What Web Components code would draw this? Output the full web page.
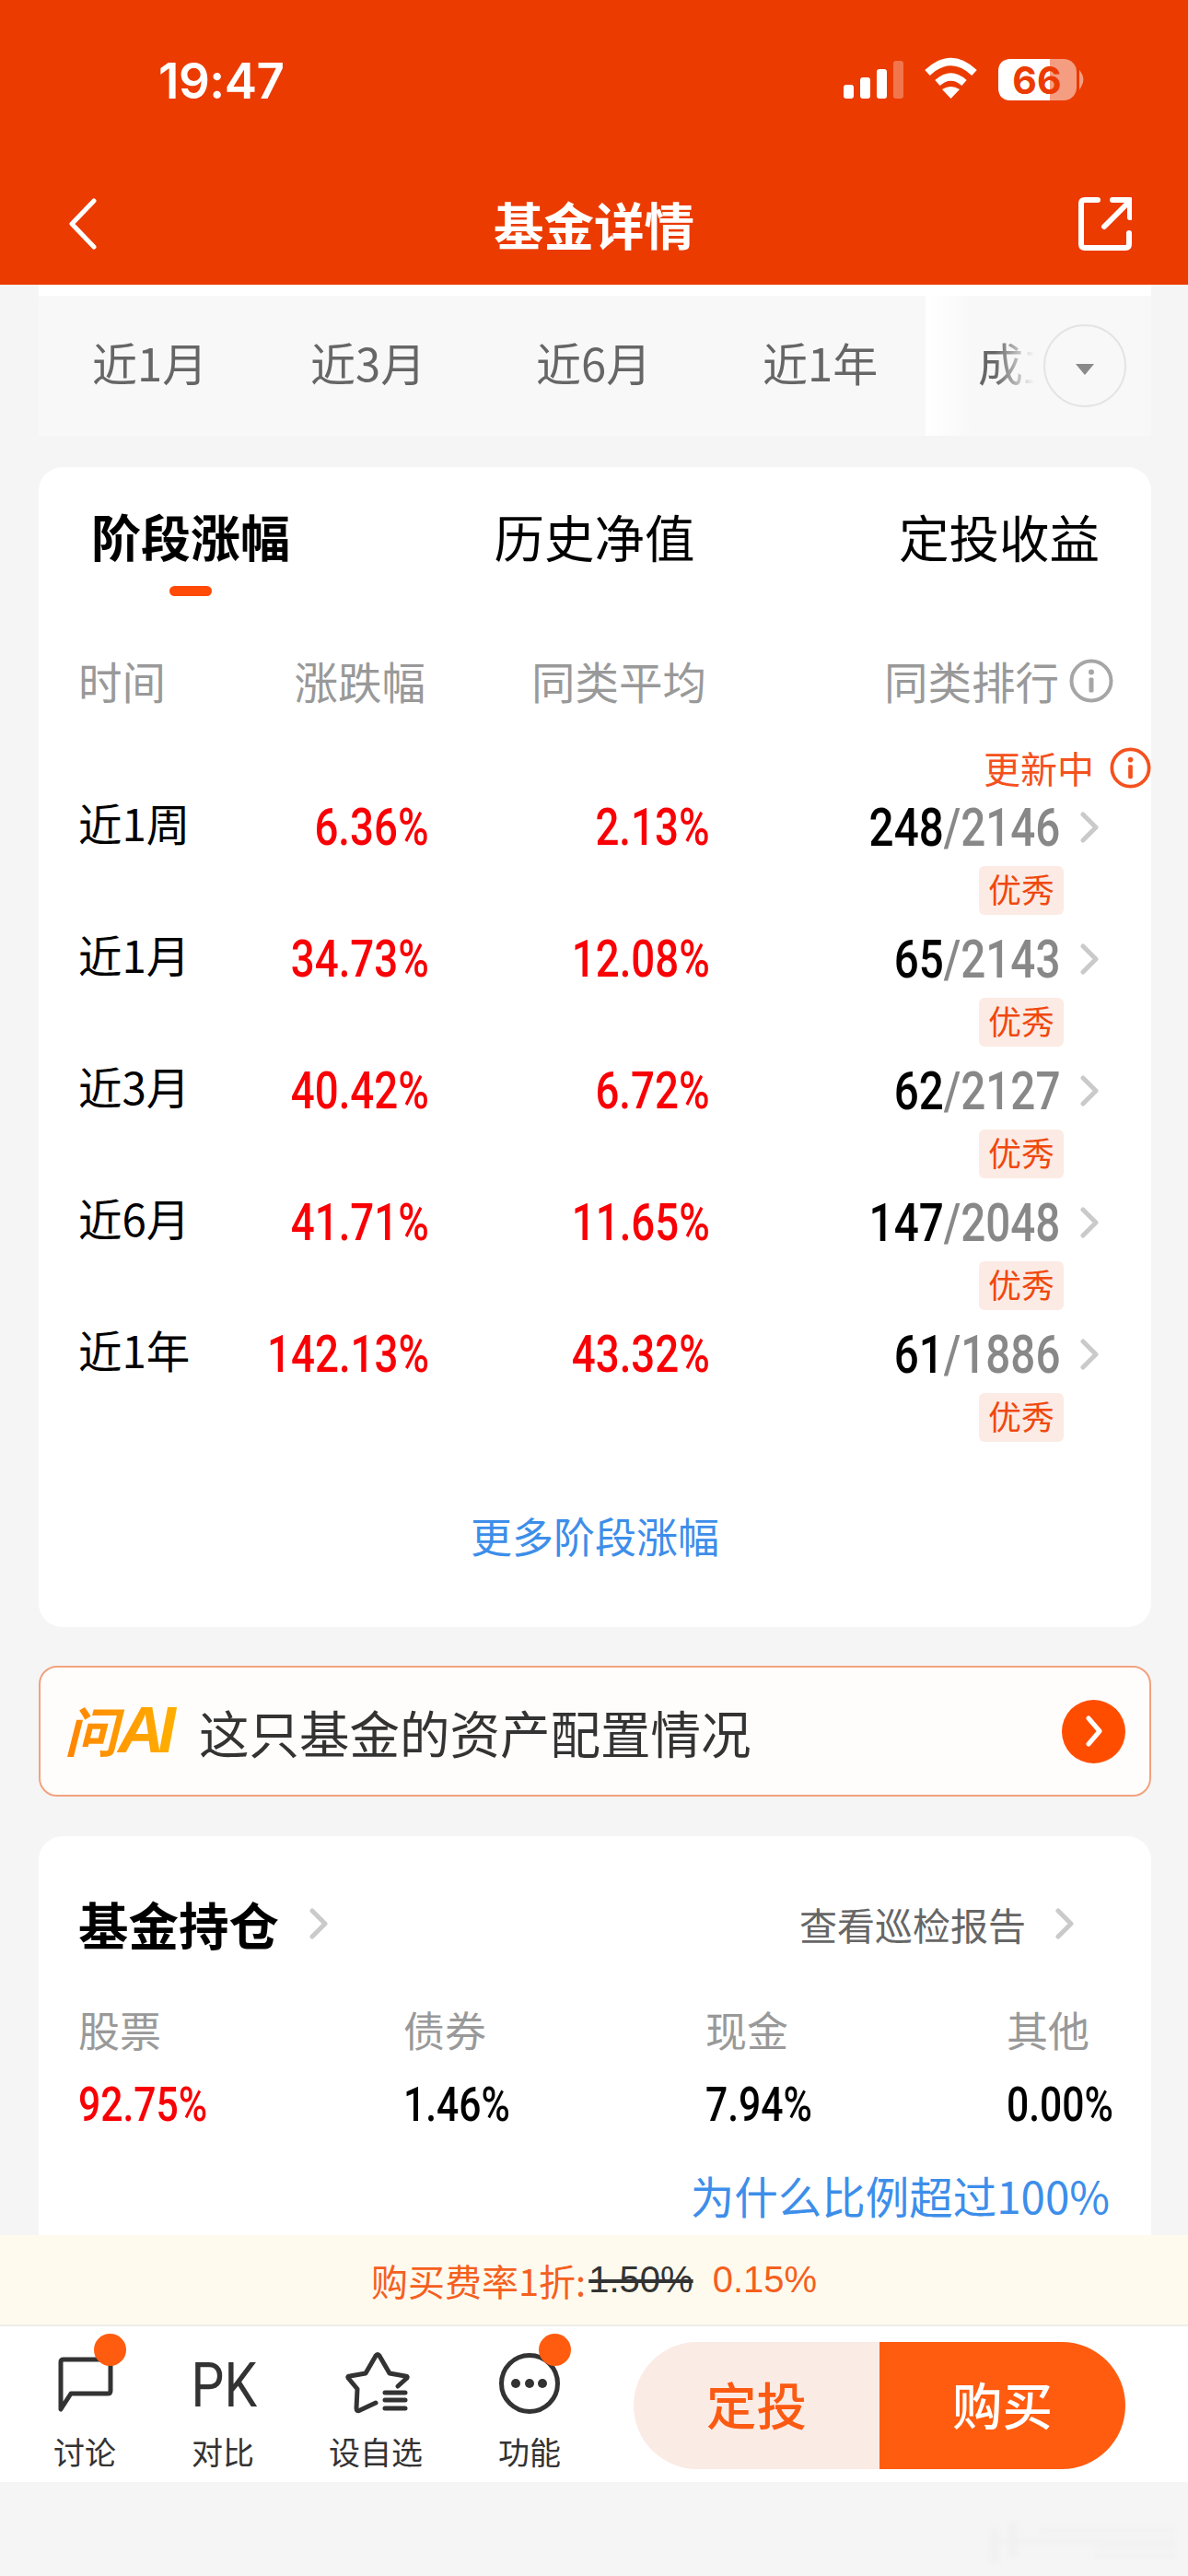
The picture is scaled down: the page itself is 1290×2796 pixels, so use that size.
<!DOCTYPE html>
<html lang="zh">
<head>
<meta charset="utf-8">
<title>基金详情</title>
<style>
  html, body { margin: 0; padding: 0; background: #f5f5f5; }
  body { font-family: "Noto Sans CJK SC", "Liberation Sans", sans-serif; color: #000; }
  fund-page { display: flex; flex-direction: column; width: 1290px; height: 2796px; overflow: hidden; }
</style>
</head>
<body>
<fund-page>
  <app-header title="基金详情" slot="top"></app-header>
  <period-tabs>
    <span>近1月</span><span>近3月</span><span>近6月</span><span>近1年</span><span>成立来</span>
  </period-tabs>
  <perf-card>
    <perf-row period="近1周" change="6.36%" avg="2.13%" rank="248" total="2146"></perf-row>
    <perf-row period="近1月" change="34.73%" avg="12.08%" rank="65" total="2143"></perf-row>
    <perf-row period="近3月" change="40.42%" avg="6.72%" rank="62" total="2127"></perf-row>
    <perf-row period="近6月" change="41.71%" avg="11.65%" rank="147" total="2048"></perf-row>
    <perf-row period="近1年" change="142.13%" avg="43.32%" rank="61" total="1886"></perf-row>
  </perf-card>
  <ai-banner>这只基金的资产配置情况</ai-banner>
  <holding-card></holding-card>
  <fee-strip slot="bottom"></fee-strip>
  <action-bar slot="bottom"></action-bar>
  <page-mark slot="bottom"></page-mark>
</fund-page>

<script>
const CHEVRON = (w, h, color) => `<svg width="${w}" height="${h}" viewBox="0 0 20 34" fill="none" stroke="${color}" stroke-width="5" stroke-linecap="round" stroke-linejoin="round"><path d="M3 3 L17 17 L3 31"/></svg>`;
const INFO = (size, color) => `<svg width="${size}" height="${size}" viewBox="0 0 48 48" fill="none"><circle cx="24" cy="24" r="21.5" stroke="${color}" stroke-width="4"/><circle cx="24" cy="14.5" r="3" fill="${color}"/><rect x="21.5" y="20.5" width="5" height="16" rx="1.5" fill="${color}"/></svg>`;

class FundPage extends HTMLElement {
  constructor() {
    super();
    this.attachShadow({ mode: 'open' }).innerHTML = `
      <style>
        :host { display: flex; flex-direction: column; }
        .scroll { height: 2117px; overflow: hidden; flex: none; padding: 0 40px 0 42px; box-sizing: border-box; display: flex; flex-direction: column; }
      </style>
      <slot name="top"></slot>
      <div class="scroll"><slot></slot></div>
      <slot name="bottom"></slot>`;
  }
}

class AppHeader extends HTMLElement {
  constructor() {
    super();
    const title = this.getAttribute('title');
    this.attachShadow({ mode: 'open' }).innerHTML = `
      <style>
        :host { display: block; height: 309px; background: #eb3b00; color: #fff; flex: none; }
        .status { height: 177px; box-sizing: border-box; padding: 62px 0 0 172px; display: flex; align-items: flex-start; }
        .time { font: 600 53px/52px "Inter", "Liberation Sans", sans-serif; letter-spacing: -.5px; width: 744px; }
        .icons { display: block; margin-top: -8px; }
        .bar { display: grid; grid-template-columns: 1fr auto 1fr; align-items: center; height: 132px; padding: 0 61px; box-sizing: border-box; }
        .bar svg:first-child { margin-left: 13px; }
        .bar svg:last-child { justify-self: end; }
        h1 { margin: 0; font: 700 54.5px/66px "Noto Sans CJK SC", sans-serif; }
      </style>
      <div class="status">
        <span class="time">19:47</span>
        <svg class="icons" width="264" height="70" viewBox="0 -10 264 70">
          <g fill="#fff">
            <rect x="0" y="28" width="11" height="15" rx="3"/>
            <rect x="18" y="20" width="11" height="23" rx="3"/>
            <rect x="36" y="11" width="11" height="32" rx="3"/>
            <rect x="54" y="2" width="11" height="41" rx="3" opacity=".3"/>
          </g>
          <g fill="none" stroke="#fff" stroke-width="8">
            <path d="M91 15 Q116.5 -9 142 15"/>
            <path d="M102 26 Q116.5 13 131 26"/>
          </g>
          <path d="M107 33 Q116.5 27 126 33 L116.5 43 Z" fill="#fff"/>
          <rect x="168" y="0" width="85" height="45" rx="14" fill="#fff" opacity=".5"/>
          <path d="M182 0 H224 V45 H182 Q168 45 168 31 V14 Q168 0 182 0Z" fill="#fff"/>
          <path d="M257 15 Q262 22 257 30 Z" fill="#fff" opacity=".5" stroke="#fff" stroke-width="2"/>
          <text x="210" y="38" text-anchor="middle" font-family="Inter, Liberation Sans, sans-serif" font-weight="700" font-size="41" fill="#eb3b00">66</text>
        </svg>
      </div>
      <div class="bar">
        <svg width="32" height="56" viewBox="0 0 32 56" fill="none" stroke="#fff" stroke-width="5" stroke-linecap="round" stroke-linejoin="round"><path d="M28 3 L4 28 L28 53"/></svg>
        <h1>${title}</h1>
        <svg width="58" height="58" viewBox="0 0 58 58" fill="none" stroke="#fff" stroke-width="6" stroke-linecap="round" stroke-linejoin="round"><path d="M21 3 H7 Q3 3 3 7 V51 Q3 55 7 55 H51 Q55 55 55 51 V39"/><path d="M28 32 L55 5"/><path d="M37 3 H56 V22"/></svg>
      </div>`;
  }
}

class PeriodTabs extends HTMLElement {
  constructor() {
    super();
    this.attachShadow({ mode: 'open' }).innerHTML = `
      <style>
        :host { display: block; position: relative; flex: none; height: 164px; border-top: 12px solid #fff; box-sizing: border-box; background: #f8f8f8; overflow: hidden; }
        .list { display: grid; grid-template-columns: 237px 245px 246px 234px 200px; height: 142px; align-items: center; padding-left: 58px; font-size: 49px; color: #666; white-space: nowrap; }
        .fade { position: absolute; left: 963px; top: 0; width: 245px; height: 152px; background: linear-gradient(90deg, #fff 0, #f8f8f8 50px, #f8f8f800 58px, #f8f8f800 75px, #f8f8f8 118px); }
        .more { position: absolute; left: 1091px; top: 31px; width: 86px; height: 86px; border: 2px solid #e4e4e4; border-radius: 50%; display: flex; align-items: center; justify-content: center; }
        .more svg { display: block; margin-top: 8px; }
      </style>
      <div class="list"><slot></slot></div>
      <div class="fade"></div>
      <div class="more"><svg width="22" height="14" viewBox="0 0 22 14"><path d="M1 1 H21 L11 13 Z" fill="#8a8a8a"/></svg></div>`;
  }
}

class PerfCard extends HTMLElement {
  constructor() {
    super();
    this.attachShadow({ mode: 'open' }).innerHTML = `
      <style>
        :host { display: block; flex: none; height: 1259px; margin-top: 34px; background: #fff; border-radius: 26px; box-sizing: border-box; padding-top: 36px; }
        .tabs { display: flex; justify-content: space-between; padding: 0 56px 0 57px; font-size: 54.5px; line-height: 78px; }
        .tab { display: flex; flex-direction: column; align-items: center; }
        .on { font-weight: 600; font-size: 54px; }
        .on::after { content: ""; width: 46px; height: 11px; margin-top: 15px; border-radius: 6px; background: #ff4a08; }
        .head { display: grid; grid-template-columns: 181px 196px 305px 1fr; margin: 62px 41px 0 43px; font-size: 47.5px; line-height: 60px; color: #999; }
        .head span { text-align: right; }
        .head span:first-child { text-align: left; }
        .head .rank { display: flex; justify-content: flex-end; align-items: center; gap: 11px; }
        svg { display: block; }
        .update { display: flex; justify-content: flex-end; align-items: center; gap: 17px; height: 44px; margin-top: 42px; margin-bottom: 15px; font-size: 40px; color: #f4511e; }
        .more { margin-top: 52px; text-align: center; font-size: 45px; line-height: 60px; color: #3d8eea; }
      </style>
      <div class="tabs">
        <div class="tab on">阶段涨幅</div><div class="tab">历史净值</div><div class="tab">定投收益</div>
      </div>
      <div class="head">
        <span>时间</span><span>涨跌幅</span><span>同类平均</span>
        <span class="rank">同类排行${INFO(48, '#a6a6a6')}</span>
      </div>
      <div class="update">更新中${INFO(45, '#f4511e')}</div>
      <slot></slot>
      <div class="more">更多阶段涨幅</div>`;
  }
}

class PerfRow extends HTMLElement {
  constructor() {
    super();
    const a = n => this.getAttribute(n);
    this.attachShadow({ mode: 'open' }).innerHTML = `
      <style>
        :host { display: grid; grid-template-columns: 181px 200px 305px 1fr; height: 143px; margin: 0 57px 0 43px; align-items: start; font-size: 47.5px; line-height: 60px; }
        .period { margin-top: -7px; }
        .num { display: flex; justify-content: flex-end; margin-top: -2px; white-space: nowrap; font: 500 55px/60px "Roboto", sans-serif; color: #f80005; }
        .num span, .line > span { display: inline-block; transform: scaleX(.83); transform-origin: right center; }
        .rank { display: flex; flex-direction: column; align-items: flex-end; }
        .line { display: flex; align-items: center; gap: 22px; margin-top: -2px; font: 500 58px/60px "Roboto", sans-serif; }
        .line > span { transform: scaleX(.82); }
        .line i { font-style: normal; color: #888; }
        .line svg { display: block; }
        .tag { margin: 12px 38px 0 0; width: 92px; height: 53px; border-radius: 6px; background: #fcebe4; color: #f0480f; font-size: 36px; line-height: 49px; text-align: center; }
      </style>
      <div class="period">${a('period')}</div>
      <div class="num"><span>${a('change')}</span></div>
      <div class="num"><span>${a('avg')}</span></div>
      <div class="rank">
        <div class="line"><span>${a('rank')}<i>/${a('total')}</i></span>${CHEVRON(20, 34, '#cacaca')}</div>
        <div class="tag">优秀</div>
      </div>`;
  }
}

class AiBanner extends HTMLElement {
  constructor() {
    super();
    this.attachShadow({ mode: 'open' }).innerHTML = `
      <style>
        :host { display: flex; flex: none; align-items: center; height: 142px; margin-top: 42px; box-sizing: border-box; background: #fffdfc; border: 2px solid #f2a27f; border-radius: 20px; padding: 0 26px 0 26px; font-size: 54.5px; color: #333; }
        .ai { display: flex; align-items: baseline; width: 146px; flex: none; margin-top: -3px; background: linear-gradient(90deg, #ff8400, #ffb800); -webkit-background-clip: text; background-clip: text; color: transparent; font-style: italic; }
        .ai b { font: italic 700 58px/70px "Noto Sans CJK SC", sans-serif; }
        .ai em { font: italic 700 70px/70px "Liberation Sans", sans-serif; letter-spacing: -7px; margin-left: 0; padding-right: 7px; }
        .text { flex: 1; }
        .go { width: 69px; height: 69px; border-radius: 50%; background: #ff4d00; display: flex; align-items: center; justify-content: center; }
        .go svg { display: block; }
      </style>
      <span class="ai"><b>问</b><em>AI</em></span>
      <span class="text"><slot></slot></span>
      <span class="go"><svg width="20" height="34" viewBox="0 0 20 34" fill="none" stroke="#fff" stroke-width="5" stroke-linecap="round" stroke-linejoin="round"><path d="M4 3 L16 17 L4 31"/></svg></span>`;
  }
}

class HoldingCard extends HTMLElement {
  constructor() {
    super();
    const cols = [['股票', '92.75%', 'red'], ['债券', '1.46%', ''], ['现金', '7.94%', ''], ['其他', '0.00%', '']];
    this.attachShadow({ mode: 'open' }).innerHTML = `
      <style>
        :host { display: block; flex: none; height: 520px; margin-top: 43px; background: #fff; border-radius: 26px 26px 0 0; box-sizing: border-box; padding: 62px 45px 0 43px; }
        .top { display: flex; align-items: center; height: 66px; }
        h2 { margin: 0; font: 700 54.5px/66px "Noto Sans CJK SC", sans-serif; }
        .first { margin-left: 33px; }
        .report { margin-left: auto; margin-right: 39px; font-size: 41px; color: #666; display: flex; align-items: center; gap: 32px; }
        svg { display: block; }
        .grid { display: grid; grid-template-columns: 353px 328px 327px 1fr; margin-top: 52px; }
        .label { font-size: 45px; line-height: 60px; color: #999; }
        .val { margin-top: 22px; font: 500 52px/60px "Roboto", sans-serif; white-space: nowrap; }
        .val span { display: inline-block; transform: scaleX(.82); transform-origin: left center; }
        .red { color: #f80005; }
        .why { margin-top: 38px; text-align: right; font-size: 47.5px; line-height: 60px; color: #3d8eea; }
      </style>
      <div class="top">
        <h2>基金持仓</h2><span class="first">${CHEVRON(20, 34, '#cacaca')}</span>
        <span class="report">查看巡检报告${CHEVRON(20, 34, '#cacaca')}</span>
      </div>
      <div class="grid">
        ${cols.map(c => `<div><div class="label">${c[0]}</div><div class="val ${c[2]}"><span>${c[1]}</span></div></div>`).join('')}
      </div>
      <div class="why">为什么比例超过100%</div>`;
  }
}

class FeeStrip extends HTMLElement {
  constructor() {
    super();
    this.attachShadow({ mode: 'open' }).innerHTML = `
      <style>
        :host { display: flex; flex: none; align-items: center; justify-content: center; height: 99px; box-sizing: border-box; border-bottom: 2px solid #eeeeea; background: #fffaee; font-size: 40px; color: #f4601e; }
        s { color: #333; margin-left: 3px; font-family: "Liberation Sans", sans-serif; }
        b { font-weight: 400; margin-left: 21px; font-family: "Liberation Sans", sans-serif; }
      </style>
      <span>购买费率1折:</span><s>1.50%</s><b>0.15%</b>`;
  }
}

class NavItem extends HTMLElement {
  constructor() {
    super();
    const w = this.getAttribute('w');
    const dot = this.hasAttribute('dot');
    this.attachShadow({ mode: 'open' }).innerHTML = `
      <style>
        :host { display: flex; flex-direction: column; align-items: center; flex: none; width: ${w}px; color: #333; }
        .icon { position: relative; width: 80px; height: 76px; }
        .dot { position: absolute; left: 50px; top: -15px; width: 35px; height: 35px; border-radius: 50%; background: #ff5c10; }
        .label { margin-top: 13px; font-size: 34px; line-height: 48px; }
      </style>
      <div class="icon"><slot name="icon"></slot>${dot ? '<div class="dot"></div>' : ''}</div>
      <div class="label"><slot></slot></div>`;
  }
}

class ActionBar extends HTMLElement {
  constructor() {
    super();
    const st = `fill="none" stroke="#333" stroke-width="5" stroke-linecap="round" stroke-linejoin="round"`;
    this.attachShadow({ mode: 'open' }).innerHTML = `
      <style>
        :host { display: flex; flex: none; height: 169px; box-sizing: border-box; padding: 23px 0 0 32px; background: #fff; }
        svg { display: block; }
        .pk { display: block; height: 76px; font: 400 66px/84px "Roboto", sans-serif; color: #333; text-align: center; transform: scaleX(.86); }
        .cta { display: flex; width: 534px; height: 138px; margin: -6px 0 0 22px; border-radius: 69px; overflow: hidden; font-size: 54.5px; text-align: center; line-height: 134px; }
        .cta span { flex: none; }
        .a { width: 267px; background: #fbebe5; color: #fb5a12; font-weight: 500; }
        .b { width: 267px; background: #ff5c10; color: #fff; font-weight: 500; }
      </style>
      <nav-item w="120" dot>
        <svg slot="icon" width="80" height="76" viewBox="0 0 80 76"><path d="M14 67 V16 Q14 13 17 13 H65 Q68 13 68 16 V47 Q68 50 65 50 H25 Z" ${st}/></svg>
        讨论
      </nav-item>
      <nav-item w="180">
        <span slot="icon" class="pk">PK</span>
        对比
      </nav-item>
      <nav-item w="152">
        <svg slot="icon" width="80" height="76" viewBox="0 0 80 76">
          <path d="M64 42 L74 33 Q75 31 72 31 L55 28 L44 9 Q42 6 40 9 L29 28 L12 31 Q9 31 10 33 L20 45 L19 66 Q19 70 23 68 L40 60" ${st}/>
          <path d="M50 49 H72 M50 57 H72 M50 66 H72" ${st} stroke-linecap="butt"/>
        </svg>
        设自选
      </nav-item>
      <nav-item w="182" dot>
        <svg slot="icon" width="80" height="76" viewBox="0 0 80 76"><circle cx="40" cy="39" r="30.5" ${st}/><circle cx="25" cy="39" r="5" fill="#333"/><circle cx="40" cy="39" r="5" fill="#333"/><circle cx="54" cy="39" r="5" fill="#333"/></svg>
        功能
      </nav-item>
      <div class="cta"><span class="a">定投</span><span class="b">购买</span></div>`;
  }
}

// faint smudge left in the bottom corner of the capture
class PageMark extends HTMLElement {
  constructor() {
    super();
    this.attachShadow({ mode: 'open' }).innerHTML = `
      <style>
        :host { display: flex; flex: 1; justify-content: flex-end; align-items: flex-start; padding: 40px 10px 0 0; }
        svg { display: block; filter: blur(2.5px); }
      </style>
      <svg width="210" height="50" viewBox="0 0 210 50" stroke="#efefef" fill="none" stroke-width="3">
        <path d="M10 10 V48 M30 4 V40" stroke-width="8" stroke="#f0f0f0"/>
        <path d="M60 12 H205 M10 24 H205 M120 30 H205 M120 40 H205"/>
      </svg>`;
  }
}

customElements.define('fund-page', FundPage);
customElements.define('app-header', AppHeader);
customElements.define('period-tabs', PeriodTabs);
customElements.define('perf-card', PerfCard);
customElements.define('perf-row', PerfRow);
customElements.define('ai-banner', AiBanner);
customElements.define('holding-card', HoldingCard);
customElements.define('fee-strip', FeeStrip);
customElements.define('nav-item', NavItem);
customElements.define('action-bar', ActionBar);
customElements.define('page-mark', PageMark);
</script>
</body>
</html>
